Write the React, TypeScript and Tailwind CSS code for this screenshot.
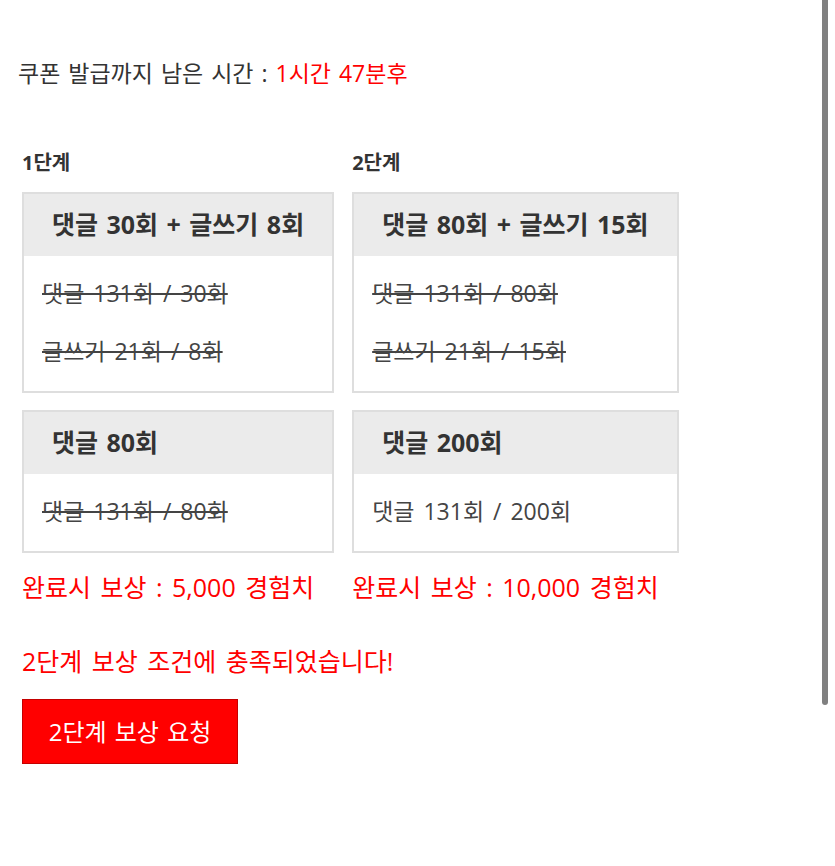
import React from "react";

const font = { fontFamily: '"Open Sans", "Noto Sans CJK KR", "Noto Sans", sans-serif' };

function Box({ title, lines, done }: { title: string; lines: string[]; done: boolean[] }) {
  return (
    <div className="border-2 border-[#dedede] bg-white">
      <div className="h-[62px] bg-[#ebebeb] px-[28px] flex items-center text-[25px] font-bold text-[#333] whitespace-nowrap [word-spacing:2px]">
        {title}
      </div>
      <div className="px-[18px] pt-[8px] pb-[11px] flex flex-col">
        {lines.map((l, i) => (
          <div
            key={i}
            className={`h-[58px] flex items-center text-[23px] text-[#444] whitespace-nowrap [word-spacing:3px] ${done[i] ? "line-through" : ""}`}
          >
            {l}
          </div>
        ))}
      </div>
    </div>
  );
}

export default function App() {
  return (
    <div className="relative w-[835px] h-[866px] bg-white overflow-hidden" style={font}>
      <div className="pt-[56px] pl-[18px] text-[23px] text-[#333] leading-[34px] [word-spacing:2px]">
        쿠폰 발급까지 남은 시간 : <span className="text-[#ff0000]">1시간 47분후</span>
      </div>
      <div className="flex gap-[18px] pl-[22px] mt-[59px]">
        <div className="flex flex-col">
          <div className="text-[20px] font-bold text-[#333] leading-[28px] mb-[15px]">1단계</div>
          <Box title="댓글 30회 + 글쓰기 8회" lines={["댓글 131회 / 30회", "글쓰기 21회 / 8회"]} done={[true, true]} />
          <div className="h-[17px]" />
          <Box title="댓글 80회" lines={["댓글 131회 / 80회"]} done={[true]} />
          <div className="mt-[17px] text-[25px] text-[#ff0000] leading-[34px] whitespace-nowrap [word-spacing:3px]">완료시 보상 : 5,000 경험치</div>
        </div>
        <div className="flex flex-col">
          <div className="text-[20px] font-bold text-[#333] leading-[28px] mb-[15px]">2단계</div>
          <Box title="댓글 80회 + 글쓰기 15회" lines={["댓글 131회 / 80회", "글쓰기 21회 / 15회"]} done={[true, true]} />
          <div className="h-[17px]" />
          <Box title="댓글 200회" lines={["댓글 131회 / 200회"]} done={[false]} />
          <div className="mt-[17px] text-[25px] text-[#ff0000] leading-[34px] whitespace-nowrap [word-spacing:3px]">완료시 보상 : 10,000 경험치</div>
        </div>
      </div>
      <div className="pl-[22px] mt-[40px] text-[25px] text-[#ff0000] leading-[34px] [word-spacing:3px]">2단계 보상 조건에 충족되었습니다!</div>
      <div className="pl-[22px] mt-[21px]">
        <button className="w-[216px] h-[65px] bg-[#ff0000] border border-[#c40000] text-white text-[24px] [word-spacing:2px]">
          2단계 보상 요청
        </button>
      </div>
      <div className="absolute left-[822px] top-0 w-[6px] h-[705px] bg-[#808080] rounded-b-[3px]" />
    </div>
  );
}
